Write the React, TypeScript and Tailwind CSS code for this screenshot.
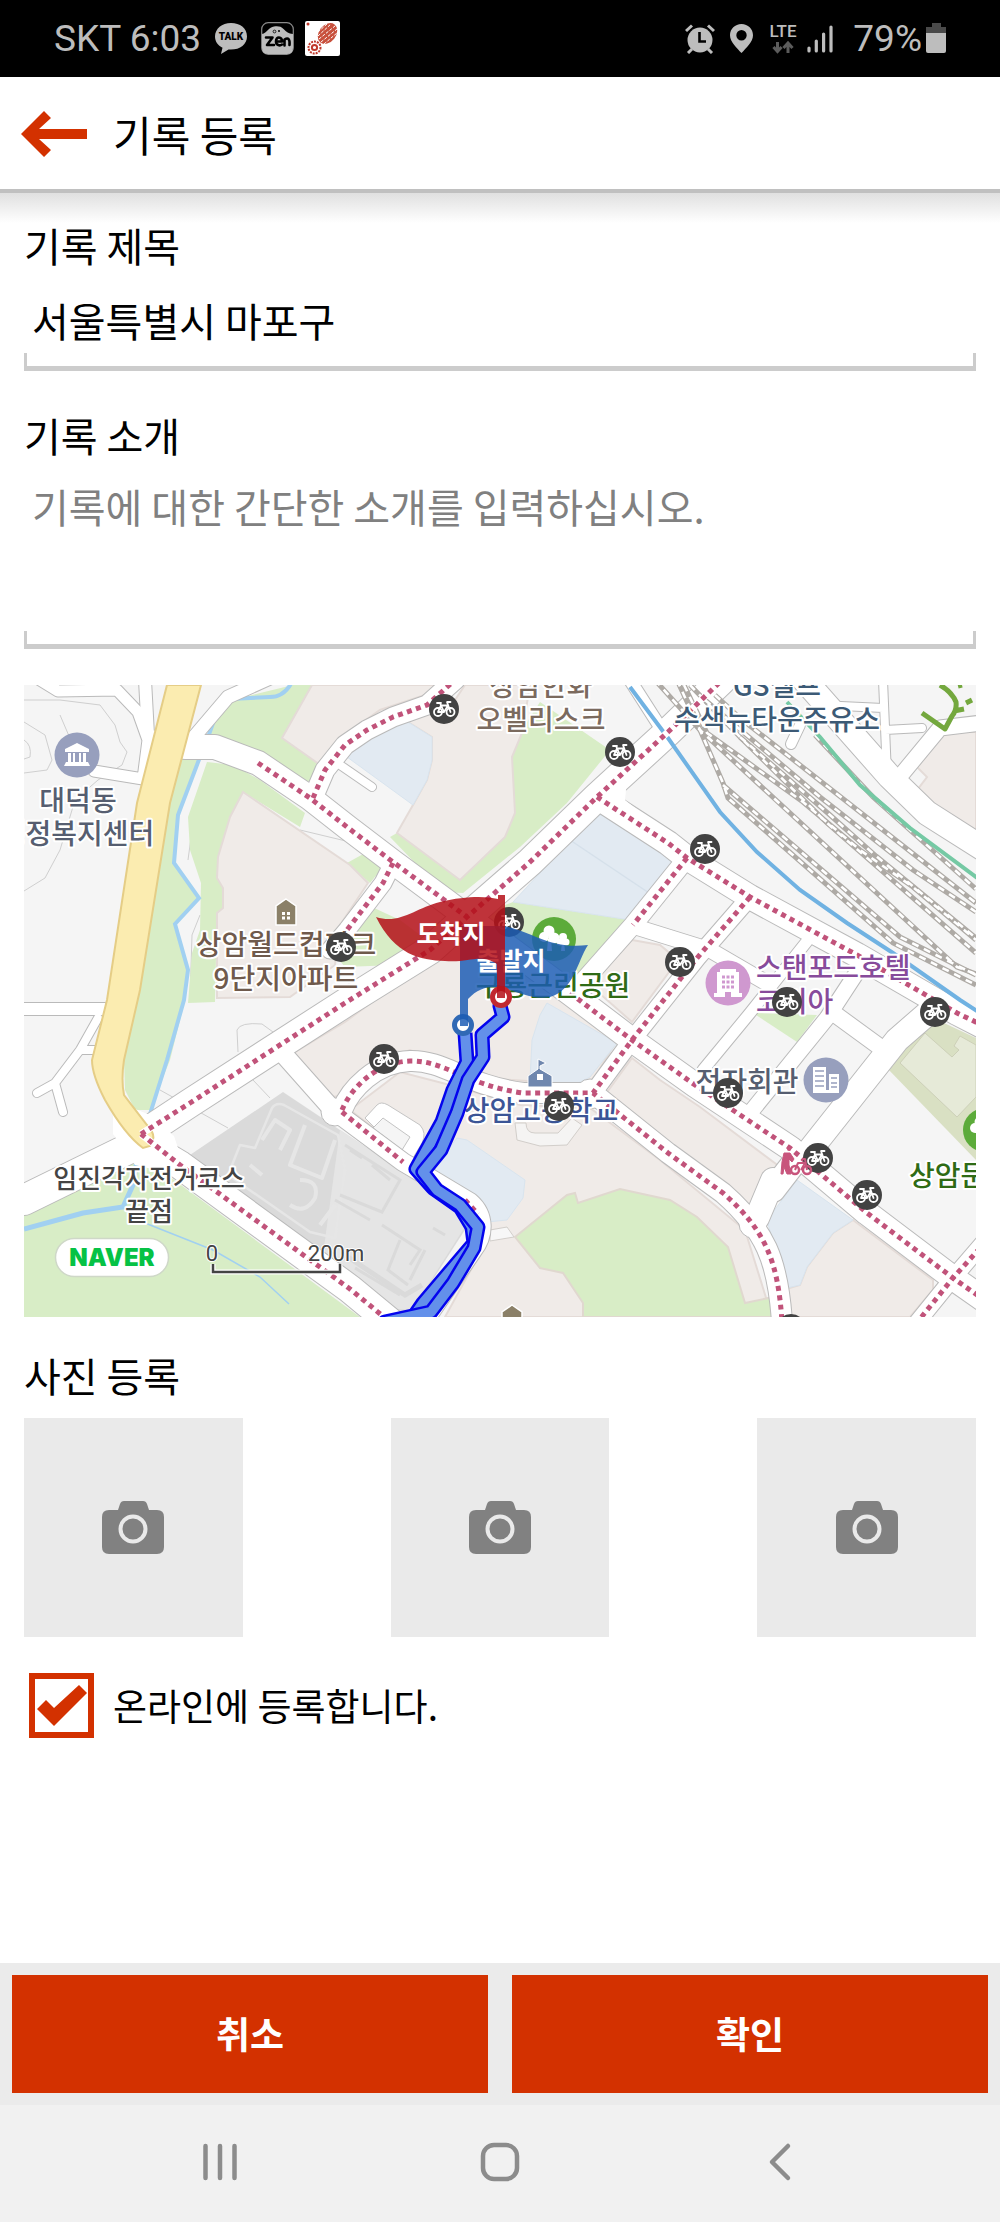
import { useState } from "react";

const SANS = "font-['Noto_Sans_CJK_KR','Noto_Sans',sans-serif]";

function StatusBar() {
  return (
    <div className="flex h-[77px] items-center justify-between bg-black pr-[54px] pl-[54px] font-['Roboto',sans-serif] text-[37px] leading-none text-[#bdbdbd]">
      <div className="flex items-center">
        <span>SKT 6:03</span>
        <svg className="ml-3.5 h-8 w-8" viewBox="0 0 32 32" aria-hidden="true">
          <path d="M16 0C7 0 0 5.800 0 13.500c0 5 3 9 7.500 11.200L6 31l7.500-4.500c10.500 1 18.500-4.500 18.500-13S25 0 16 0Z" fill="#bdbdbd" />
          <text x="16" y="17" textAnchor="middle" fontSize="10" fontWeight="900" fill="#000">TALK</text>
        </svg>
        <svg className="ml-3.5 h-[33px] w-[33px]" viewBox="0 0 33 33" aria-hidden="true">
          <rect x=".7" y=".7" width="31.600" height="31.600" rx="6.500" fill="#000" stroke="#8a8a8a" strokeWidth="1.200" />
          <path d="M1 12c5-1 7-7 12-7.500 4-.5 7-.2 9.500 2.500 3 3 5 4.500 9.500 5v14q0 6-6 6H7q-6 0-6-6Z" fill="#bdbdbd" />
          <circle cx="13.500" cy="9.500" r="1.400" fill="none" stroke="#000" strokeWidth=".8" />
          <circle cx="18" cy="9" r="1" fill="#000" />
          <path d="M5 15.500h6.500L6 23h7M15 19.500h6c0-5-6-5.500-6 0 0 4 4 4.500 6 3M23.500 23.500v-6c4-2.500 5.500 0 5 5.500" fill="none" stroke="#000" strokeWidth="2.600" strokeLinejoin="round" strokeLinecap="round" />
        </svg>
        <svg className="ml-[11px] h-[35px] w-[35px]" viewBox="0 0 35 35" aria-hidden="true">
          <rect width="35" height="35" rx="2" fill="#fff" />
          <circle cx="3" cy="3" r="1.500" fill="#c0392b" />
          <ellipse cx="22.500" cy="12.500" rx="8.500" ry="11.500" transform="rotate(38 22.500 12.500)" fill="#c8503c" />
          <path d="m13 11 9-8m-9 12 13-12m-12 15L30 5M16 21 32 8M19 23l13-11" stroke="#fff" strokeWidth="1" strokeDasharray="3 1.500" />
          <circle cx="9.500" cy="26.500" r="6" fill="none" stroke="#c0392b" strokeWidth="2" strokeDasharray="2 1" />
          <circle cx="9.500" cy="26.500" r="2.600" fill="none" stroke="#c0392b" strokeWidth="2" />
        </svg>
      </div>
      <div className="flex items-center">
        <svg className="h-[30px] w-[30px]" viewBox="0 0 30 30" fill="none" stroke="#bdbdbd" aria-hidden="true">
          <circle cx="15" cy="16" r="12.500" fill="#bdbdbd" stroke="none" />
          <path d="m1 7 6-5.500M29 7l-6-5.500" strokeWidth="3" />
          <path d="m7 25-4 4M23 25l4 4" strokeWidth="3" />
          <path d="M14.500 8v9.500H21" stroke="#000" strokeWidth="2.600" />
        </svg>
        <svg className="ml-[15px] h-[29px] w-[23px]" viewBox="0 0 23 29" aria-hidden="true">
          <path fillRule="evenodd" d="M11.500 0C5 0 0 5 0 11.200 0 18 7 24 11.500 29 16 24 23 18 23 11.200 23 5 18 0 11.500 0Zm0 6a5.200 5.200 0 1 1 0 10.400 5.200 5.200 0 0 1 0-10.400Z" fill="#bdbdbd" />
        </svg>
        <svg className="ml-4 h-[30px] w-7" viewBox="0 0 28 30" aria-hidden="true">
          <text x="14" y="13" textAnchor="middle" fontSize="17" fontWeight="500" fill="#bdbdbd">LTE</text>
          <path d="M8.500 18v9m-4-4 4 4.500 4-4.500M19 29v-9m-4.500 4L19 19l4.500 5" fill="none" stroke="#5c5c5c" strokeWidth="3" />
        </svg>
        <svg className="ml-2.5 h-[29px] w-[26px]" viewBox="0 0 26 29" stroke="#bdbdbd" strokeWidth="3.200" strokeLinecap="round" aria-hidden="true">
          <path d="M2 24v3M9.300 17v10M16.600 10v17M24 3v24" />
        </svg>
        <span className="ml-5">79%</span>
        <svg className="ml-1 h-[31px] w-5" viewBox="0 0 20 31" aria-hidden="true">
          <path d="M6 0h9v4h5v6H0V4h6Z" fill="#4a4a4a" />
          <path d="M0 10h20v18q0 2-2 2H2q-2 0-2-2Z" fill="#bdbdbd" />
        </svg>
      </div>
    </div>
  );
}

function Header() {
  return (
    <header className="relative z-10 flex h-28 items-center bg-white pt-0.5">
      <button type="button" aria-label="뒤로" className="ml-[21px] cursor-pointer">
        <svg className="h-[46px] w-[66px]" viewBox="0 0 66 46" aria-hidden="true">
          <path d="M0 23 23 0l7 7-12 11h48v10H18l12 11-7 7Z" fill="#d33100" />
        </svg>
      </button>
      <h1 className="ml-[26px] text-[42px] leading-[48px]">기록 등록</h1>
      <div className="absolute inset-x-0 top-full">
        <div className="h-1 bg-[#c0c0c0]" />
        <div className="h-[30px] bg-linear-to-b from-[#e0e0e0] to-white" />
      </div>
    </header>
  );
}

// bottom bracket drawn under the text fields
function Underline() {
  return <div className="h-[18px] border-x-[3px] border-b-[5px] border-[#cccccc]" />;
}

const ROADS: { d: string; w: number }[] = [
  { d: "M40 680 58 691 117 690 138 712 148 740 143 779 94 771", w: 11 },
  { d: "M145 680 148 735 158 738", w: 12 },
  { d: "M270 678 228 697 188 744", w: 13 },
  { d: "M24 1009H105", w: 12 },
  { d: "M98 1018 80 1050 55 1083 37 1093M55 1083 63 1112M80 1050 95 1050", w: 8 },
  { d: "M130 1148 24 1200", w: 30 },
  { d: "M185 747 215 747 258 763 310 798 347 827 393 862 447 902 467 917 570 993 632 1040 695 1085 790 1148 867 1213 953 1278 990 1304", w: 24 },
  { d: "M140 1136 190 1103 345 1003 430 950 467 917 530 862 597 797 668 732 722 680", w: 28 },
  { d: "M313 798 325 770 345 745 367 730 393 717 427 705 455 680", w: 19 },
  { d: "M393 863 383 883 347 930 330 950", w: 17 },
  { d: "M597 797 668 843 687 858 750 897 857 955 957 1013 990 1030", w: 24 },
  { d: "M687 858 633 925 580 985", w: 18 },
  { d: "M636 927 710 950 770 985", w: 15 },
  { d: "M750 897 697 958 632 1040 593 1093", w: 17 },
  { d: "M342 1110C350 1090 375 1062 410 1061 445 1060 465 1085 523 1093H593L668 1153 723 1193C765 1230 778 1260 782 1322", w: 20 },
  { d: "M278 1048 333 1110 403 1162 430 1178 470 1202C485 1215 485 1235 473 1250L425 1320", w: 18 },
  { d: "M135 1138 180 1165 350 1289 390 1322", w: 28 },
  { d: "M990 1235 953 1278 915 1325", w: 16 },
  { d: "M773 1180 757 1218M773 1190 800 1155M810 1150 897 1040 935 1007", w: 24 },
  { d: "M750 1113 827 1018 865 960", w: 15 },
  { d: "M703 1070 750 1013 812 935", w: 11 },
  { d: "M832 1012 884 1050", w: 16 },
  { d: "M340 765 372 787", w: 8 },
  { d: "M630 680 662 730", w: 12 },
  { d: "M800 675 890 777 927 813 990 853", w: 24 },
  { d: "M897 780 940 728 990 722", w: 15 },
  { d: "M883 680 887 775M820 705 883 708M885 730 922 728", w: 8 },
  { d: "M800 725 791 744", w: 10 },
];

const CYCLE_PATHS = [
  "M258 763 310 798 347 827 393 862 447 902 467 917",
  "M570 993 632 1040 695 1085 790 1148 867 1213 953 1278 980 1297",
  "M141 1134 190 1103 345 1003 430 950 467 917 530 862 597 797 668 732 722 680",
  "M313 798 325 770 345 745 367 730 393 717 427 705 455 680",
  "M393 863 383 883 347 930",
  "M597 797 668 843 687 858 750 897 857 955 957 1013 980 1024",
  "M687 858 633 925",
  "M750 897 697 958 632 1040 593 1093",
  "M342 1110C350 1090 375 1062 410 1061 445 1060 465 1085 523 1093H593L668 1153 723 1193C765 1230 778 1260 782 1322",
  "M342 1112 403 1162M465 1200 478 1214",
  "M141 1134 180 1165 350 1289 390 1322",
  "M980 1248 953 1278 915 1325",
];

const RAILS = [
  "M655 680 700 730 723 783 728 798 893 943 976 985",
  "M723 785 900 937 976 975",
  "M677 680 700 730 957 967 976 974",
  "M690 685 740 737 827 823 976 953",
  "M684 685 707 733 803 802 860 850 913 887 976 940",
  "M705 700 820 797 913 870 976 912",
  "M715 695 740 718 976 903",
  "M815 735 873 797 976 889",
  "M740 737 830 815 876 856 976 938",
];

const BEIGE = [
  "312,685 282,738 323,767 345,735 380,710 425,695 445,685",
  "243,792 350,865 368,883 340,925 335,965 290,997 217,998 217,913 223,908 223,888 217,878 218,857 230,817",
  "432,737 408,722 455,700 465,685 530,685 522,733 512,757 515,813 505,837 460,880 397,833 413,805 427,780 432,760",
  "632,940 660,945 678,960 632,1022 590,985",
  "290,1055 345,1022 470,930 560,985 620,1035 590,1085 480,1078 410,1050 370,1065 345,1095 333,1097",
  "350,1110 400,1072 450,1085 520,1105 590,1108 660,1160 745,1230 772,1317 445,1317 490,1235 480,1205 435,1175",
  "632,1058 660,1080 700,1107 780,1167 780,1180 753,1210 740,1207 723,1187 660,1140 605,1095",
  "853,1220 933,1280 933,1290 910,1317 788,1317 786,1289 800,1285 807,1267 833,1233",
  "940,732 976,732 976,833 933,810 915,793 927,777 913,763",
];

const GREEN = [
  "183,755 203,753 178,817 174,865 198,898 175,925 187,970 185,1000 170,1060 150,1110 135,1110 125,1090 124,1060 140,990 170,803",
  "217,712 228,701 293,685 312,685 282,738 323,767 318,780 300,782 260,758 207,738",
  "207,762 233,765 260,780 305,813 300,827 243,792 230,817 218,857 217,878 223,888 223,908 217,913 215,1002 188,1003 192,953 200,930 201,883 190,850 188,817",
  "347,863 365,853 383,867 370,883",
  "372,907 400,920 440,950 395,965 345,967 335,955 350,940",
  "520,733 540,702 610,750 567,803 520,847 463,893 443,892 390,837 397,833 460,880 505,837 515,813 512,757",
  "505,905 513,902 630,920 580,975 560,980 500,935 478,920",
  "515,1237 567,1195 575,1193 578,1203 620,1189 670,1200 697,1217 728,1247 745,1303 773,1297 776,1317 583,1317 583,1303 563,1273 540,1268",
  "753,1013 817,1015 797,1042",
  "24,1213 123,1163 143,1163 170,1177 360,1317 24,1317",
];

const BLUE = [
  "347,757 360,740 377,730 408,722 432,737 432,760 427,780 413,805",
  "600,815 617,815 675,855 672,868 630,920 513,902 540,873 570,840",
  "547,1003 617,1043 590,1077 570,1087 530,1080 532,1040 540,1015",
  "435,1167 457,1138 467,1140 525,1180 523,1198 507,1220 487,1222 470,1200 437,1178",
  "767,1220 797,1180 853,1220 833,1233 807,1267 800,1285 787,1288 777,1257",
];

const BIKES = [
  [341, 947], [444, 709], [620, 752], [509, 922], [705, 849], [680, 962], [787, 1002],
  [935, 1012], [728, 1093], [818, 1158], [867, 1195], [384, 1059], [559, 1106], [791, 1329],
];

const LABELS: { text: string; x: number; y: number; fill: string; start?: boolean; size?: number }[] = [
  { text: "대덕동", x: 78, y: 811, fill: "#565e70" },
  { text: "행정복지센터", x: 77, y: 844, fill: "#565e70" },
  { text: "상암월드컵파크", x: 286, y: 955, fill: "#6f5a4c" },
  { text: "9단지아파트", x: 286, y: 989, fill: "#6f5a4c" },
  { text: "상암한화", x: 541, y: 696, fill: "#7b6a5e" },
  { text: "오벨리스크", x: 541, y: 730, fill: "#7b6a5e" },
  { text: "GS셀프", x: 777, y: 696, fill: "#3c5a76" },
  { text: "수색뉴타운주유소", x: 777, y: 730, fill: "#3c5a76" },
  { text: "스탠포드호텔", x: 756, y: 978, fill: "#874b9b", start: true },
  { text: "코리아", x: 756, y: 1012, fill: "#874b9b", start: true },
  { text: "전자회관", x: 747, y: 1092, fill: "#565e70" },
  { text: "상암고등학교", x: 541, y: 1121, fill: "#3b5596" },
  { text: "상암문화공원", x: 909, y: 1186, fill: "#2f6b16", start: true },
  { text: "임진각자전거코스", x: 149, y: 1188, fill: "#444444", size: 26 },
  { text: "끝점", x: 149, y: 1221, fill: "#444444", size: 26 },
  { text: "구룡근린공원", x: 553, y: 996, fill: "#2f6b16" },
];

const ROUTE_A = "M465 1033 467 1062 453 1090 442 1122 416 1169 433 1188 460 1207 472 1227 474 1243 423 1303 410 1322";
const ROUTE_B = "M500 1006 503 1017 482 1035 483 1057 468 1080 457 1113 441 1150 423 1172 437 1190 460 1205 478 1227 474 1248 453 1283 431 1312 385 1322";

function Bike({ x, y }: { x: number; y: number }) {
  return (
    <g transform={`translate(${x} ${y})`}>
      <circle r="15" fill="#424242" />
      <g fill="none" stroke="#fff" strokeWidth="1.800" strokeLinejoin="round" strokeLinecap="round">
        <circle cx="-6" cy="3" r="4" />
        <circle cx="6.500" cy="3" r="4" />
        <path d="m-6 3 3-6.500H4L0 3h-6M-4-6l4 9M6.500 3 3-7h3.500M-7-6h4" />
      </g>
    </g>
  );
}

function House({ x, y }: { x: number; y: number }) {
  return (
    <g transform={`translate(${x} ${y})`}>
      <path d="M0-13 10-6v19h-20V-6Z" fill="#8b8068" stroke="#fff" strokeWidth="1.500" />
      <path d="M-4 1.500h3M1 1.500h3M-4 6h3M1 6h3" stroke="#fff" strokeWidth="3" />
    </g>
  );
}

function Tree({ x, y }: { x: number; y: number }) {
  return (
    <g transform={`translate(${x} ${y})`}>
      <circle r="22" fill="#5cab3a" />
      <g fill="#fff">
        <circle cx="-5" cy="-8" r="5.500" />
        <circle cx="-10" cy="-2" r="5" />
        <circle cx="0" cy="-1" r="5.500" />
        <path d="M-6 0h3l1 12h-5Z" />
        <circle cx="9" cy="-2" r="4" />
        <circle cx="6" cy="3" r="3.500" />
        <circle cx="12" cy="3" r="3.500" />
        <path d="M8 3h2l1 9H7Z" />
      </g>
    </g>
  );
}

function RouteMap() {
  return (
    <svg className="mt-9 block h-auto w-full" viewBox="24 685 952 632" role="img" aria-label="기록 경로 지도">
      <rect x="24" y="685" width="952" height="632" fill="#f5f5f5" />

      <g fill="none" stroke="#cfcfcf" strokeWidth="1">
        <path d="M24 700 60 700 100 705 115 725 120 742 127 752 122 765 98 780 75 800 60 850 45 878 24 891" />
        <path d="M24 722 45 735 52 760 47 770 24 773M60 715 75 750M24 740Q32 745 30 757L24 759" />
        <path d="M238 1052 237 1030Q240 1022 262 1024L273 1032M253 1080 270 1098M160 1090 228 1128" />
        <path d="M300 830 350 842M188 860 192 830 215 765M190 1000 192 935 200 915" />
      </g>

      {GREEN.map((points) => <polygon key={points} points={points} fill="#d8edc6" />)}
      {BEIGE.map((points) => <polygon key={points} points={points} fill="#f0ebe8" stroke="#e4dbd7" strokeWidth="2" />)}
      {BLUE.map((points) => <polygon key={points} points={points} fill="#e2eaf2" stroke="#d8e4ee" strokeWidth="1" />)}
      <polygon points={GREEN[7]} fill="#d8edc6" stroke="#e0d8cf" strokeWidth="2" />
      <path d="M570 840 655 897" stroke="#d5e0ea" strokeWidth="1.500" />
      <polygon points="927,1015 976,1038 976,1160 887,1068" fill="#d9e0c3" />
      <polygon points="900,1063 957,1117 976,1097 976,1045 960,1036 954,1046 959,1050 952,1057 925,1033" fill="#e6ead8" stroke="#cdd0b8" />

      {/* apartment complex */}
      <polygon points="187,1157 283,1092 403,1172 470,1222 412,1312 385,1310 187,1165" fill="#dadada" />
      <polygon points="340,1130 403,1172 468,1222 412,1310 385,1308 322,1262" fill="#e5e5e5" />
      <g fill="none" stroke="#e6e6e6" strokeWidth="2.500" strokeLinejoin="round">
        <path d="M272 1108Q276 1102 284 1105L338 1135 345 1170 335 1238 310 1232 228 1175 240 1145 255 1148Z" />
        <path d="M262 1140 275 1120 290 1130 280 1150M305 1125 290 1165 322 1178 335 1140M250 1165 262 1175M300 1180Q320 1180 315 1198 305 1215 290 1205M335 1205 320 1225" strokeWidth="4" />
      </g>
      <g fill="none" stroke="#dadada" strokeWidth="3">
        <path d="M345 1145 400 1180 382 1212 340 1195M350 1150 362 1158M372 1165 390 1180M335 1200 370 1220M382 1225 420 1250 410 1265M400 1240 388 1270 408 1285M425 1250 410 1280M355 1268 400 1295M433 1228 445 1235" />
        <path d="M345 1255 405 1295 422 1285" strokeWidth="5" />
      </g>

      {/* streams */}
      <g fill="none" stroke="#a1d0f1" strokeWidth="4">
        <path d="M293 680Q285 697 270 697L230 699 217 712 207 740 200 757 178 815 174 863 199 898 175 924 188 970 184 1000 167 1060 150 1114" />
        <path d="M137 1160 133 1185 123 1207 83 1213 24 1229" strokeWidth="5" />
        <path d="M145 1223 213 1250 260 1277 289 1304" strokeWidth="1.500" />
      </g>

      {/* driveways */}
      <path d="M365 1118 377 1105Q381 1101 388 1105L420 1125Q427 1133 422 1143L410 1163Z" fill="#fff" stroke="#c4c4c4" />
      <path d="M373 1128 383 1118 410 1137 402 1150Z" fill="#f5f5f5" stroke="#c4c4c4" />
      <path d="M515 1123 517 1140 540 1146 567 1145 582 1125 572 1118 558 1133H535Q526 1133 526 1123Z" fill="#f5f4f3" stroke="#d2ceca" />
      <path d="M490 1230 507 1227 514 1237 490 1241Z" fill="#f7f7f7" stroke="#d2ceca" />

      <g fill="none" strokeLinecap="round" strokeLinejoin="round">
        {ROADS.map((r) => <path key={r.d} d={r.d} stroke="#bababa" strokeWidth={r.w + 2} />)}
        <circle cx="753" cy="1224" r="14" fill="#fff" stroke="#bababa" />
        <circle cx="335" cy="1112" r="14" fill="#fff" stroke="#bababa" />
        <circle cx="590" cy="1094" r="15" fill="#fff" stroke="#bababa" />
        {ROADS.map((r) => <path key={r.d} d={r.d} stroke="#ffffff" strokeWidth={r.w} />)}
      </g>
      <path d="M113 1100V1134L135 1165 165 1172 178 1148 174 1136 150 1115Z" fill="#fff" />
      <path d="M627 780 625 800 640 812 600 800Z" fill="#fff" />

      <path
        d="M167 685 137 803 107 1000 92 1060Q92 1075 105 1100 125 1135 143 1148L150 1146Q158 1136 147 1125L124 1095Q121 1080 124 1060L140 990 170 803 201 685Z"
        fill="#fbecb0"
        stroke="#e5cd86"
        strokeWidth="2"
      />

      {/* railway yard */}
      <g fill="none">
        {RAILS.map((d) => <path key={d} d={d} stroke="#aeaaa5" strokeWidth="5" />)}
        {RAILS.map((d) => <path key={d} d={d} stroke="#fff" strokeWidth="2.600" strokeDasharray="7 6" />)}
        <path d="M630 687 668 738 720 812 757 852 800 890 847 923 893 953 960 1000 980 1013" stroke="#70b2e2" strokeWidth="4" />
        <path d="M787 702 820 737 860 785 910 828 980 880" stroke="#75c9a4" strokeWidth="4" />
        <path d="M940 685Q952 692 956 702 957 710 952 716L945 729 922 713M954 711 964 709M966 703 972 700M958 686 962 685" stroke="#74a83e" strokeWidth="5" strokeLinejoin="round" />
      </g>

      <g fill="none">
        {CYCLE_PATHS.map((d) => <path key={d} d={d} stroke="#fff" strokeWidth="7" />)}
        {CYCLE_PATHS.map((d) => <path key={d} d={d} stroke="#c1537a" strokeWidth="5" strokeDasharray="5 4.500" />)}
      </g>

      {/* points of interest */}
      <g transform="translate(77 755)">
        <circle r="22.500" fill="#979fbd" />
        <path d="M0-12-12-6v3h24v-3ZM-9-2h3V7h-3ZM-4-2h2V7h-2ZM2-2h2V7H2ZM6-2h3V7H6ZM-11 7h22l2 4h-26Z" fill="#fff" />
      </g>
      <House x={286} y={912} />
      <House x={512} y={1318} />
      <Tree x={554} y={939} />
      <Tree x={985} y={1130} />
      <g transform="translate(728 983)">
        <circle r="22.500" fill="#cf98cf" />
        <path d="M-8-14H8v3h3v21h3v4H3V9h-6v5h-11v-4h3v-21h3Z" fill="#fff" />
        <path d="M-6-6h3M-1.500-6h3M3-6h3M-6-1h3M-1.500-1h3M3-1h3M-6 4h3M-1.500 4h3M3 4h3" stroke="#cf98cf" strokeWidth="3" />
      </g>
      <g transform="translate(826 1080)">
        <circle r="22.500" fill="#979fbd" />
        <path d="M-13-13H0v25h-13ZM3-6h10v18H3ZM-13 10h26v3h-26Z" fill="#fff" />
        <path d="M-11-9h9M-11-4h9M-11 1h9M-11 6h9M5-2h6M5 3h6M5 7h6" stroke="#979fbd" strokeWidth="1.500" />
      </g>
      <g transform="translate(540 1077)">
        <path d="M-12 10V-1L-2-8v-10l8 4-6 3v3l12 7v11Z" fill="#6f87ae" stroke="#fff" strokeWidth="1" />
        <rect x="-3" y="-3" width="6" height="6" fill="#fff" />
      </g>

      <g fontFamily="'Noto Sans CJK KR', sans-serif" fontWeight="500" stroke="#fff" strokeWidth="4" strokeLinejoin="round" paintOrder="stroke">
        {LABELS.map((l) => (
          <text key={l.text} x={l.x} y={l.y} fill={l.fill} fontSize={l.size ?? 28} textAnchor={l.start ? "start" : "middle"}>
            {l.text}
          </text>
        ))}
      </g>

      {BIKES.map(([x, y]) => <Bike key={`${x}-${y}`} x={x} y={y} />)}

      {/* cyclist dismount sign */}
      <g fill="none" stroke="#c8557c" strokeWidth="2.500" strokeLinejoin="round">
        <circle cx="789" cy="1149" r="2" fill="#c8557c" stroke="none" />
        <path d="M784 1153h6l4 6-2 3-3-3v6l2 9h-4l-3-7-1 7h-2l1-12Z" fill="#c8557c" strokeWidth="1" />
        <circle cx="795" cy="1170" r="4" />
        <circle cx="807" cy="1170" r="4" />
        <path d="m795 1170 3-7h7l-4 7M802 1159h3l2 11" strokeWidth="2" />
      </g>

      {/* recorded route */}
      <g fill="none" strokeLinejoin="round">
        <path d={ROUTE_A} stroke="#0404ee" strokeWidth="15" />
        <path d={ROUTE_A} stroke="#6390ea" strokeWidth="10" />
        <path d={ROUTE_B} stroke="#0404ee" strokeWidth="15" strokeLinecap="round" />
        <path d={ROUTE_B} stroke="#6390ea" strokeWidth="10" strokeLinecap="round" />
      </g>

      {/* start and finish flags */}
      <g fontFamily="'Noto Sans CJK KR', sans-serif" fontWeight="700" fontSize="25" textAnchor="middle" fill="#fff">
        <circle cx="463" cy="1025" r="8.500" fill="#fff" stroke="#3069b5" strokeWidth="5" />
        <path d="M460 926H503C530 930 550 950 588 945 577 962 574 990 550 997 520 1003 495 970 468 999V1026H460Z" fill="#1b5cb4" fillOpacity=".84" />
        <text x="511" y="970">출발지</text>
        <circle cx="501" cy="997" r="8.500" fill="#fff" stroke="#c1282f" strokeWidth="5" />
        <path d="M376 917C400 925 415 908 440 902 465 896 485 896 498 899V895H505V998H497V964C480 953 470 963 445 961 420 960 395 955 376 917Z" fill="#b40f18" fillOpacity=".85" />
        <text x="451" y="943">도착지</text>
      </g>

      <rect x="55.500" y="1238.500" width="113" height="38" rx="19" fill="#fff" stroke="#cfd8c8" strokeWidth="1.500" />
      <text x="112" y="1266" textAnchor="middle" fontFamily="Inter, sans-serif" fontWeight="900" fontSize="24" fill="#06c245">NAVER</text>
      <g fontFamily="Roboto, sans-serif" fontSize="22" textAnchor="middle" fill="#444" stroke="#fff" strokeWidth="2" paintOrder="stroke">
        <text x="212" y="1261">0</text>
        <text x="336" y="1261">200m</text>
      </g>
      <path d="M213 1264V1272H340V1264" fill="none" stroke="#fff" strokeWidth="5" />
      <path d="M213 1264V1272H340V1264" fill="none" stroke="#444" strokeWidth="2.500" />
    </svg>
  );
}

function PhotoSlot({ index }: { index: number }) {
  return (
    <button type="button" aria-label={`사진 ${index} 등록`} className="flex aspect-square w-[23%] cursor-pointer items-center justify-center bg-[#eaeaea]">
      <svg className="h-[53px] w-[62px]" viewBox="0 0 62 53" aria-hidden="true">
        <path d="M7 9h9l2-6q1-3 4-3h19q3 0 4 3l2 6h8q7 0 7 7v30q0 7-7 7H7q-7 0-7-7V16q0-7 7-7Z" fill="#818181" />
        <circle cx="31" cy="28" r="12.500" fill="none" stroke="#eaeaea" strokeWidth="4" />
      </svg>
    </button>
  );
}

function NavigationBar() {
  return (
    <nav className="grid h-[117px] grid-cols-3 bg-[#f1f1f1] px-[8%] pb-1 *:flex *:items-center *:justify-center">
      <button type="button" aria-label="최근 앱">
        <svg className="h-10 w-10" viewBox="0 0 40 40" stroke="#8c8c8c" strokeWidth="4.500" strokeLinecap="round">
          <path d="M5.500 4v32M20 4v32M34.500 4v32" />
        </svg>
      </button>
      <button type="button" aria-label="홈">
        <svg className="h-10 w-10" viewBox="0 0 40 40" fill="none" stroke="#8c8c8c" strokeWidth="4.500">
          <rect x="3" y="3" width="34" height="34" rx="11" />
        </svg>
      </button>
      <button type="button" aria-label="이전">
        <svg className="h-10 w-10" viewBox="0 0 40 40" fill="none" stroke="#8c8c8c" strokeWidth="4.500" strokeLinecap="round" strokeLinejoin="round">
          <path d="M28 4 12 20l16 16" />
        </svg>
      </button>
    </nav>
  );
}

export default function App() {
  const [title, setTitle] = useState("서울특별시 마포구");
  const [intro, setIntro] = useState("");
  const [online, setOnline] = useState(true);

  return (
    <div className={`flex min-h-screen flex-col bg-white text-black ${SANS}`}>
      <StatusBar />
      <Header />

      <main className="flex flex-col px-6 pt-8 pb-10 text-[40px] leading-[48px]">
        <label htmlFor="title">기록 제목</label>
        <input
          id="title"
          value={title}
          onChange={(e) => setTitle(e.target.value)}
          className="mt-[18px] h-[66px] w-full bg-transparent px-2 outline-none"
        />
        <Underline />

        <label htmlFor="intro" className="mt-10">기록 소개</label>
        <textarea
          id="intro"
          value={intro}
          onChange={(e) => setIntro(e.target.value)}
          placeholder="기록에 대한 간단한 소개를 입력하십시오."
          className="mt-[23px] h-[149px] w-full resize-none bg-transparent px-2 outline-none placeholder:text-[#808080]"
        />
        <Underline />

        <RouteMap />

        <h2 className="mt-[34px]">사진 등록</h2>
        <div className="mt-[19px] flex justify-between">
          {[1, 2, 3].map((n) => <PhotoSlot key={n} index={n} />)}
        </div>

        <label className="mt-9 ml-[5px] flex items-center gap-[19px] text-[37px]">
          <span className="relative h-[65px] w-[65px]">
            <input
              type="checkbox"
              checked={online}
              onChange={(e) => setOnline(e.target.checked)}
              className="peer block h-full w-full appearance-none border-[6px] border-[#d33100] bg-white"
            />
            <svg className="pointer-events-none absolute inset-0 hidden peer-checked:block" viewBox="0 0 65 65" aria-hidden="true">
              <path d="m8 36 9-9 8 8 25-23 8 8-33 33Z" fill="#d33100" />
            </svg>
          </span>
          온라인에 등록합니다.
        </label>
      </main>

      <footer className="mt-auto">
        <div className="grid grid-cols-2 gap-6 bg-[#ebebeb] p-3 text-[37px] font-bold text-white">
          <button type="button" className="h-[118px] cursor-pointer bg-[#d33100]">취소</button>
          <button type="button" className="h-[118px] cursor-pointer bg-[#d33100]">확인</button>
        </div>
        <NavigationBar />
      </footer>
    </div>
  );
}
